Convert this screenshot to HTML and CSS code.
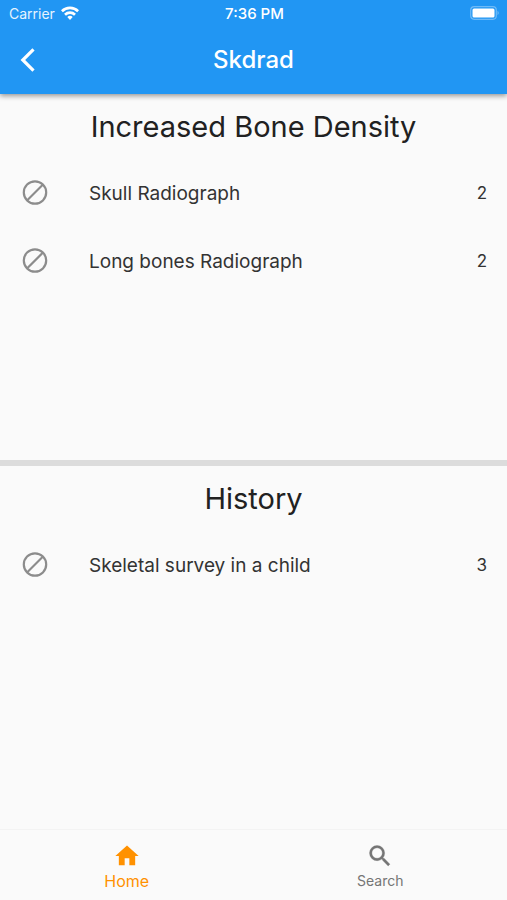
FILE: index.html
```html
<!DOCTYPE html>
<html lang="en">
<head>
<meta charset="utf-8">
<meta name="viewport" content="width=device-width, initial-scale=1">
<title>Skdrad</title>
<link rel="stylesheet" href="styles.css">
</head>
<body>
<svg class="sprite" aria-hidden="true">
  <symbol id="block" viewBox="0 0 26 26">
    <g fill="none" stroke="currentColor" stroke-width="2.2"><circle cx="13" cy="12.5" r="11.2"/><path d="M5 20.5 21 4.5"/></g>
  </symbol>
</svg>
<header class="top">
  <div class="status">
    <div class="carrier">
      <span>Carrier</span>
      <svg class="wifi" viewBox="0 0 18 14" aria-hidden="true">
        <g fill="none" stroke="currentColor" stroke-width="2.7"><path d="M.9 5.2a11.7 11.7 0 0 1 16.2 0"/><path d="M4 8.7a7.2 7.2 0 0 1 10 0"/></g>
        <path fill="currentColor" d="M6.3 11.1a3.9 3.9 0 0 1 5.4 0L9 14z"/>
      </svg>
    </div>
    <time class="clock">7:36 PM</time>
    <svg class="battery" viewBox="0 0 30 14" aria-hidden="true">
      <rect x=".7" y=".7" width="25.6" height="12.6" rx="3.5" fill="none" stroke="currentColor" stroke-opacity=".35" stroke-width="1.2"/>
      <rect x="2.5" y="2.5" width="22" height="9" rx="1.5" fill="currentColor"/>
      <path d="M27.6 4.8q2 2.2 0 4.4z" fill="currentColor" fill-opacity=".45"/>
    </svg>
  </div>
  <div class="bar">
    <button class="back" type="button" aria-label="Back">
      <svg viewBox="0 0 16 24" aria-hidden="true"><path d="M13.5 1.3 2.8 12l10.7 10.7" fill="none" stroke="currentColor" stroke-width="3.2"/></svg>
    </button>
    <h1>Skdrad</h1>
  </div>
</header>
<main>
  <section>
    <h2>Increased Bone Density</h2>
    <ul>
      <li><svg class="mark" aria-hidden="true"><use href="#block"/></svg><span class="name">Skull Radiograph</span><span class="count">2</span></li>
      <li><svg class="mark" aria-hidden="true"><use href="#block"/></svg><span class="name">Long bones Radiograph</span><span class="count">2</span></li>
    </ul>
  </section>
  <hr>
  <section>
    <h2>History</h2>
    <ul>
      <li><svg class="mark" aria-hidden="true"><use href="#block"/></svg><span class="name">Skeletal survey in a child</span><span class="count">3</span></li>
    </ul>
  </section>
</main>
<nav>
  <a class="tab active" href="#home">
    <svg viewBox="0 0 24 24" aria-hidden="true"><path fill="currentColor" d="M10 20v-6h4v6h5v-8h3L12 3 2 12h3v8z"/></svg>
    <span>Home</span>
  </a>
  <a class="tab" href="#search">
    <svg viewBox="0 0 24 24" aria-hidden="true"><path fill="currentColor" stroke="currentColor" stroke-width=".3" d="M15.5 14h-.79l-.28-.27A6.47 6.47 0 0 0 16 9.5 6.5 6.5 0 1 0 9.5 16c1.61 0 3.09-.59 4.23-1.57l.27.28v.79l5 4.99L20.49 19zm-6 0a4.5 4.5 0 1 1 0-9 4.5 4.5 0 0 1 0 9z"/></svg>
    <span>Search</span>
  </a>
</nav>
</body>
</html>
```

FILE: styles.css
```css
* {
  box-sizing: border-box;
}

body {
  display: flex;
  flex-direction: column;
  min-height: 100vh;
  margin: 0;
  background: #fafafa;
  color: #212121;
  font-family: Inter, "Liberation Sans", sans-serif;
}

.sprite {
  position: absolute;
  width: 0;
  height: 0;
}

.top {
  background: #2196f3;
  color: #fff;
  box-shadow: 0 2px 5px rgba(0, 0, 0, 0.4);
}

.status {
  display: grid;
  grid-template-columns: 1fr auto 1fr;
  align-items: center;
  height: 26px;
  padding: 0 7px 0 9px;
  font-size: 14px;
}

.carrier {
  display: flex;
  align-items: center;
  gap: 6px;
  color: #e6f3fe;
}

.wifi {
  width: 18px;
  height: 14px;
  color: #fff;
}

.clock {
  font-size: 15px;
  font-weight: 500;
}

.battery {
  justify-self: end;
  width: 30px;
  height: 14px;
}

.bar {
  display: grid;
  grid-template-columns: 56px 1fr 56px;
  align-items: center;
  height: 68px;
  padding-bottom: 1px;
}

.back {
  display: flex;
  align-items: center;
  justify-content: center;
  height: 48px;
  padding: 0;
  border: 0;
  background: none;
  color: inherit;
}

.back svg {
  width: 16px;
  height: 24px;
}

h1 {
  margin: 0;
  font-size: 24px;
  font-weight: 500;
  text-align: center;
}

main {
  display: flex;
  flex: 1;
  flex-direction: column;
}

section {
  flex: 1 1 0;
}

section:first-child {
  margin-bottom: 3px;
}

h2 {
  margin: 0;
  padding-top: 13px;
  font-size: 29px;
  font-weight: 400;
  line-height: 40px;
  text-align: center;
}

hr {
  width: 100%;
  height: 6px;
  margin: 0;
  border: 0;
  background: #dcdcdc;
}

ul {
  margin: 0;
  padding: 12px 20px 0 22px;
  list-style: none;
}

li {
  display: flex;
  align-items: center;
  height: 68px;
  color: #333;
}

.mark {
  width: 26px;
  height: 26px;
  margin-right: 41px;
  color: #8c8c8c;
}

.name {
  flex: 1;
  font-size: 19px;
}

.count {
  font-size: 17px;
}

nav {
  display: flex;
  height: 71px;
  border-top: 1px solid #f3f3f3;
}

.tab {
  display: flex;
  flex: 1;
  flex-direction: column;
  align-items: center;
  padding-top: 12px;
  color: #757575;
  font-size: 14px;
  line-height: 22px;
  text-decoration: none;
}

.tab svg {
  width: 28px;
  height: 28px;
}

.active {
  color: #ff9100;
  font-size: 16px;
}
```
